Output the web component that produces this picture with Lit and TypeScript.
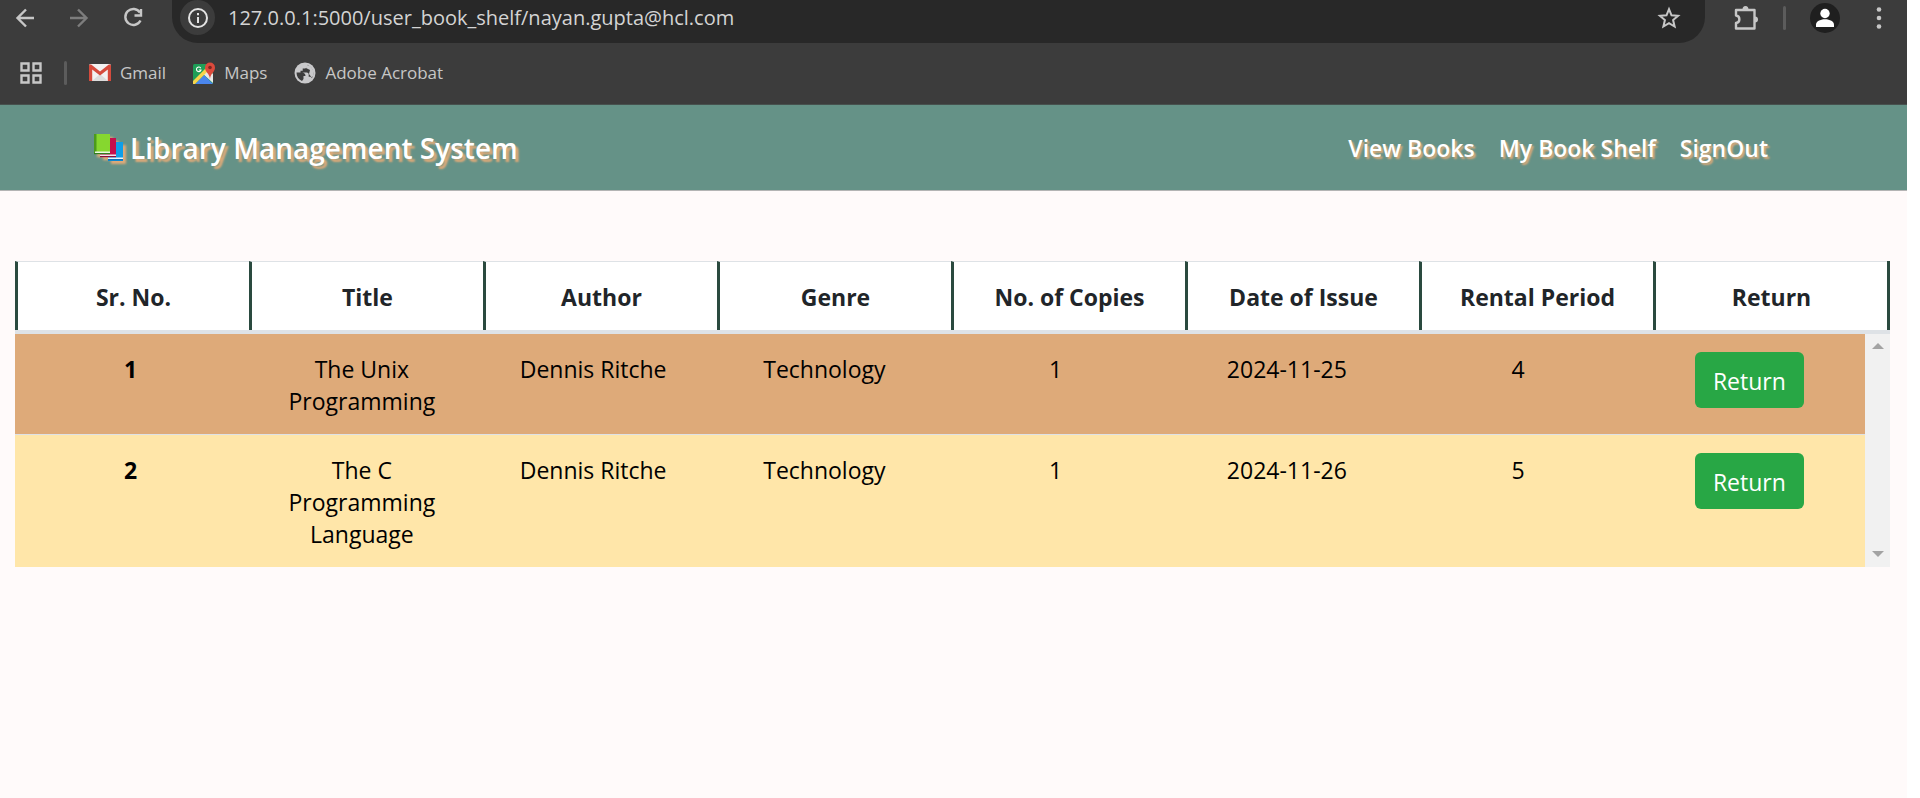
import { LitElement, html, css } from "lit";
import { customElement, state } from "lit/decorators.js";

interface Loan {
  title: string;
  author: string;
  genre: string;
  copies: number;
  issued: string;
  period: number;
}

@customElement("browser-bar")
class BrowserBar extends LitElement {
  static styles = css`
    :host {
      display: block;
      background: #3c3c3c;
      color: #c7c7c7;
      border-bottom: 1px solid #47514e;
    }
    button {
      border: 0;
      padding: 0;
      background: none;
      color: inherit;
      display: flex;
    }
    svg {
      display: block;
    }
    .toolbar {
      display: flex;
      align-items: flex-start;
      height: 43px;
      padding: 0 13px 0 12px;
    }
    .tools {
      display: flex;
      align-items: center;
      height: 35px;
    }
    .history {
      gap: 26px;
      padding-right: 24px;
    }
    .dim {
      color: #7d7d7d;
    }
    .address {
      flex: 1;
      height: 43px;
      display: flex;
      align-items: flex-start;
      background: #282828;
      border-radius: 0 0 26px 26px;
      padding: 0 24px 0 8px;
    }
    .info {
      width: 35px;
      height: 35px;
      border-radius: 50%;
      background: #3c3c3c;
      align-items: center;
      justify-content: center;
      color: #e3e3e3;
    }
    .url {
      flex: 1;
      min-width: 0;
      height: 34px;
      margin-left: 13px;
      border: 0;
      padding: 0;
      background: none;
      outline: none;
      color: #d4d4d4;
      font: 20px "Open Sans", "Noto Sans", sans-serif;
    }
    .actions {
      padding-left: 28px;
      gap: 24px;
    }
    .rule {
      width: 3px;
      height: 24px;
      border-radius: 2px;
      background: #5c5c5c;
    }
    .bookmarks {
      display: flex;
      align-items: center;
      height: 59px;
      padding: 0 20px 2px;
      font: 17px/24px "Open Sans", "Noto Sans", sans-serif;
    }
    .bookmarks .rule {
      margin: 0 22px;
    }
    .mark {
      display: flex;
      align-items: center;
      gap: 9px;
      margin-right: 27px;
      color: inherit;
      text-decoration: none;
    }
  `;

  render() {
    return html`
      <div class="toolbar">
        <div class="tools history">
          <button aria-label="Back">
            <svg width="28" height="28" viewBox="0 0 28 28" fill="none" stroke="currentColor" stroke-width="2.4">
              <path d="M22 14H6M14 5.5L5.5 14l8.500 8.500" />
            </svg>
          </button>
          <button class="dim" aria-label="Forward">
            <svg width="28" height="28" viewBox="0 0 28 28" fill="none" stroke="currentColor" stroke-width="2.400">
              <path d="M4 14h16M12 5.500l8.500 8.500-8.500 8.500" />
            </svg>
          </button>
          <button aria-label="Reload">
            <svg width="28" height="28" viewBox="0 0 28 28" fill="none" stroke="currentColor" stroke-width="2.400">
              <path d="M20 8.500A8 8 0 1 0 20.500 16.500" />
              <path d="M21 5v6.500H14.500" />
            </svg>
          </button>
        </div>
        <div class="address">
          <button class="info" aria-label="Site information">
            <svg width="22" height="22" viewBox="0 0 22 22" fill="none" stroke="currentColor" stroke-width="2">
              <circle cx="11" cy="11" r="9" />
              <path d="M11 10v6M11 6v2.200" />
            </svg>
          </button>
          <input class="url" aria-label="Address" .value=${"127.0.0.1:5000/user_book_shelf/nayan.gupta@hcl.com"} />
          <div class="tools">
            <button aria-label="Bookmark this page">
              <svg width="24" height="24" viewBox="0 0 24 24" fill="none" stroke="currentColor" stroke-width="2">
                <path d="M12 3.200l2.500 6.100 6.600.5-5 4.300 1.500 6.400-5.600-3.400-5.600 3.400 1.500-6.400-5-4.300 6.600-.5z" />
              </svg>
            </button>
          </div>
        </div>
        <div class="tools actions">
          <button aria-label="Extensions">
            <svg width="26" height="26" viewBox="0 0 26 26">
              <path
                d="M3 5h18.500v18.500H3v-5.500c4.500-.5 4.500-7 0-7.500z"
                fill="none" stroke="currentColor" stroke-width="2.400" stroke-linejoin="round"
              />
              <path d="M9.500 4.500a3 3.500 0 0 1 6 0zM22 11.500a3 3 0 0 1 0 6z" fill="currentColor" />
            </svg>
          </button>
          <span class="rule"></span>
          <button aria-label="Profile">
            <svg width="30" height="30" viewBox="0 0 30 30">
              <circle cx="15" cy="15" r="15" fill="#1f1f1f" />
              <circle cx="15" cy="10.500" r="4.700" fill="#fff" />
              <path d="M6 24v-2.500c0-3 4-5.300 9-5.300s9 2.300 9 5.300V24z" fill="#fff" />
            </svg>
          </button>
          <button aria-label="Menu">
            <svg width="30" height="24" viewBox="0 0 30 24" fill="currentColor">
              <circle cx="15" cy="3.500" r="2.300" />
              <circle cx="15" cy="12" r="2.300" />
              <circle cx="15" cy="20.500" r="2.300" />
            </svg>
          </button>
        </div>
      </div>
      <nav class="bookmarks" aria-label="Bookmarks">
        <button aria-label="Apps">
          <svg width="22" height="22" viewBox="0 0 22 22" fill="none" stroke="currentColor" stroke-width="2.400">
            <path d="M1.500 1.500h7v7h-7zM13.500 1.500h7v7h-7zM1.500 13.500h7v7h-7zM13.500 13.500h7v7h-7z" />
          </svg>
        </button>
        <span class="rule"></span>
        <a class="mark" href="#gmail">
          <svg width="22" height="18" viewBox="0 0 22 18">
            <rect width="22" height="17" rx="1.500" fill="#f2f2f2" />
            <path d="M3 17l8-7 8 7z" fill="#dcdcdc" />
            <path d="M0 17V1.500C0 .5 1.500 0 2.500.8L11 7.500 19.500.8c1-.8 2.500-.3 2.500.7V17h-3.200V5.500L11 11.500 3.200 5.500V17z" fill="#d54b3d" />
          </svg>
          Gmail
        </a>
        <a class="mark" href="#maps">
          <svg width="22" height="22" viewBox="0 0 22 22">
            <rect y="2" width="20" height="20" rx="1.500" fill="#1e9e57" />
            <path d="M10 12l5-5 5 5v9z" fill="#e8e8e8" />
            <path d="M2 22l9-9 9 9z" fill="#4a86ee" />
            <path d="M0 19L13 6l2.500 2.500L2 22H0z" fill="#f7d44c" />
            <path d="M7.800 6.200A2.300 2.300 0 1 0 8 8H5.800" fill="none" stroke="#fff" stroke-width="1.100" />
            <path d="M17 17c-.5-6-5-6.500-5-11.500a5 5 0 0 1 10 0c0 5-4.500 5.500-5 11.500z" fill="#dc4a3c" />
            <circle cx="17" cy="5.500" r="1.800" fill="#7c2620" />
          </svg>
          Maps
        </a>
        <a class="mark" href="#acrobat">
          <svg width="22" height="22" viewBox="0 0 22 22">
            <circle cx="11" cy="11" r="10.500" fill="#c9c9cb" />
            <path
              d="M2.500 10.500h5.500c2 0 3.500 1.500 3.500 3.500h-2v3l-1.500 2C4.500 17.500 2.500 14.500 2.500 10.500zM13 2.800v1.700c0 1.200-1 2-2.200 2H8.700v2.200H6.500v1.800h6.200c1.200 0 2 .9 2 2v2.200h1.100c1 0 1.700.6 2 1.500 2.800-3.500 2-10.500-4.800-13.400z"
              fill="#3c3c3c"
            />
            <path d="M13 3c4 1 6.500 4 6.500 8 0 2-.6 3.500-1.600 4.800L15 12l1-4-4-2z" fill="#c9c9cb" />
          </svg>
          Adobe Acrobat
        </a>
      </nav>
    `;
  }
}

@customElement("app-root")
class AppRoot extends LitElement {
  @state() private loans: Loan[] = [
    { title: "The Unix Programming", author: "Dennis Ritche", genre: "Technology", copies: 1, issued: "2024-11-25", period: 4 },
    { title: "The C Programming Language", author: "Dennis Ritche", genre: "Technology", copies: 1, issued: "2024-11-26", period: 5 },
  ];

  private headings = ["Sr. No.", "Title", "Author", "Genre", "No. of Copies", "Date of Issue", "Rental Period", "Return"];

  static styles = css`
    :host {
      display: block;
      min-height: 100vh;
      box-sizing: border-box;
      padding-right: 13px;
      background: #fff;
      font: 23px/32px "Open Sans", "Noto Sans", sans-serif;
      color: #212529;
    }
    .window {
      min-height: 100vh;
      background: #fffafa;
    }
    .site {
      display: flex;
      align-items: center;
      justify-content: space-between;
      height: 85px;
      margin-top: 0;
      padding: 0 139px 0 94px;
      background: #659287;
      border-bottom: 1px solid #b4b4b4;
      font-weight: 600;
    }
    .brand,
    .link {
      color: #fff;
      text-decoration: none;
    }
    .brand {
      display: flex;
      align-items: center;
      gap: 6px;
      font-size: 28px;
      text-shadow: 3px 3px 2px #deaa79;
    }
    .books {
      filter: drop-shadow(3px 3px 1px #deaa79);
    }
    .links {
      display: flex;
      gap: 24px;
    }
    .link {
      text-shadow: 2px 2px 2px #deaa79;
    }
    .shelf {
      display: grid;
      grid-template-columns: 1fr 25px;
      margin: 70px 17px 0 15px;
    }
    .table {
      display: contents;
    }
    .head {
      grid-column: 1 / -1;
      background: #fff;
      border-bottom: 4px solid #dee2e6;
    }
    .row {
      display: grid;
      grid-template-columns: repeat(8, 1fr);
    }
    .head .row {
      border-right: 3px solid #2a4a3f;
    }
    .cell {
      padding: 19px 18px 17px;
      border-top: 1px solid #dee2e6;
      text-align: center;
    }
    .head .cell {
      border-left: 3px solid #2a4a3f;
      font-weight: 700;
    }
    .body .row {
      color: #000;
      background: #deaa79;
    }
    .body .row:nth-child(even) {
      background: #ffe6a9;
    }
    .body .row:first-child .cell {
      border-top: 0;
    }
    .number {
      font-weight: 700;
    }
    .body .action {
      height: 0;
      padding-top: 18px;
    }
    .return {
      height: 56px;
      padding: 2px 18px 0;
      border: 0;
      border-radius: 6px;
      background: #28a745;
      color: #fff;
      font: inherit;
      display: block;
      margin: 0 auto;
    }
    .scroll {
      display: flex;
      flex-direction: column;
      justify-content: space-between;
      align-items: center;
      padding: 9px 0 10px;
      background: #f1f1f1;
    }
  `;

  render() {
    return html`
      <div class="window">
        <browser-bar></browser-bar>
        <header class="site">
          <a class="brand" href="#home">
            <svg class="books" width="30" height="28" viewBox="0 0 30 28" aria-hidden="true">
              <path d="M14 8h15v19H14z" fill="#0f9fe8" />
              <path d="M14 23.500h15v1.500H14z" fill="#e9f4fb" />
              <path d="M14 25h15v1.500H14z" fill="#0a6fb8" />
              <path d="M6 4h16v19H6z" fill="#c50f4c" />
              <path d="M6 20.500h16V22H6z" fill="#f4e5ea" />
              <path d="M6 22h16v1.200H6z" fill="#8f0b38" />
              <path d="M0 0h16v20H0z" fill="#86d72f" />
              <path d="M0 0h2.500v20H0z" fill="#4c9a1c" />
              <path d="M1 17.500h15V19H1z" fill="#eef8e4" />
              <path d="M0 19h16v1.200H0z" fill="#2f7d1c" />
            </svg>
            Library Management System
          </a>
          <nav class="links">
            <a class="link" href="#books">View Books</a>
            <a class="link" href="#shelf">My Book Shelf</a>
            <a class="link" href="#signout">SignOut</a>
          </nav>
        </header>
        <main class="shelf">
          <table class="table">
            <thead class="head">
              <tr class="row">
                ${this.headings.map((h) => html`<th class="cell" scope="col">${h}</th>`)}
              </tr>
            </thead>
            <tbody class="body">
              ${this.loans.map(
                (loan, i) => html`
                  <tr class="row">
                    <th class="cell number" scope="row">${i + 1}</th>
                    <td class="cell">${loan.title}</td>
                    <td class="cell">${loan.author}</td>
                    <td class="cell">${loan.genre}</td>
                    <td class="cell">${loan.copies}</td>
                    <td class="cell">${loan.issued}</td>
                    <td class="cell">${loan.period}</td>
                    <td class="cell action"><button class="return">Return</button></td>
                  </tr>
                `,
              )}
            </tbody>
          </table>
          <div class="scroll" aria-hidden="true">
            <svg width="12" height="6" viewBox="0 0 12 6"><path d="M0 6l6-6 6 6z" fill="#a3a3a3" /></svg>
            <svg width="12" height="6" viewBox="0 0 12 6"><path d="M0 0l6 6 6-6z" fill="#a3a3a3" /></svg>
          </div>
        </main>
      </div>
    `;
  }
}
